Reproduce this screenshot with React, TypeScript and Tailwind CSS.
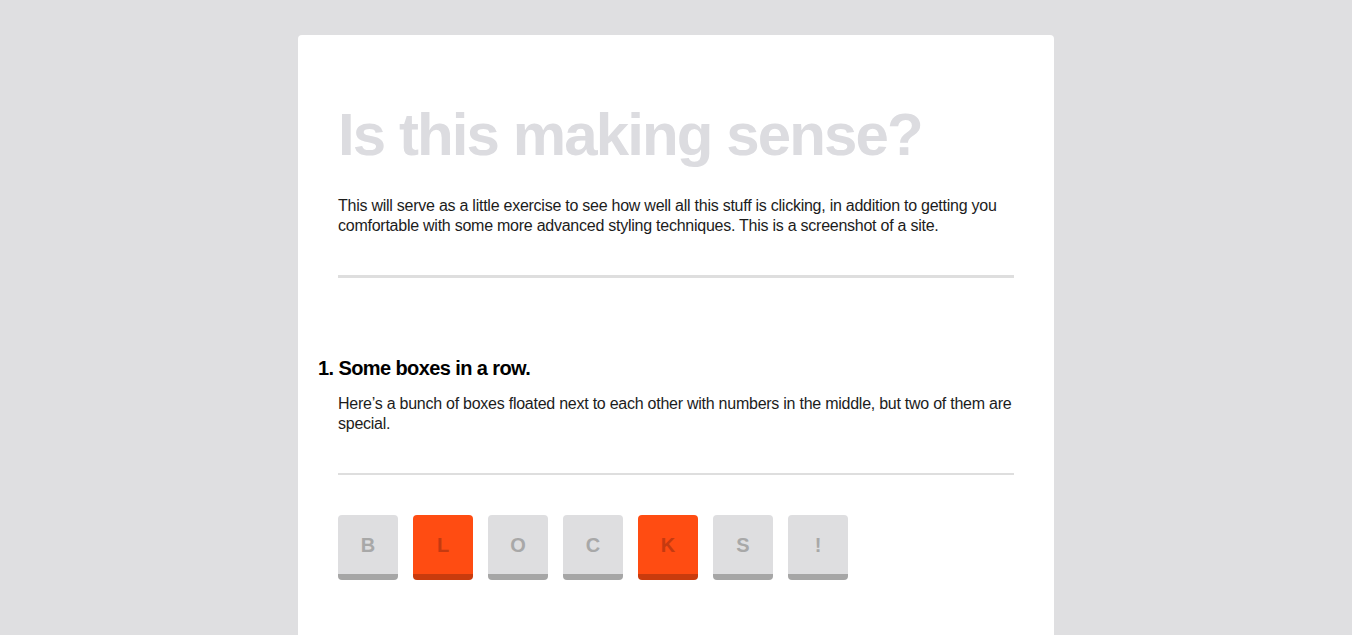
import React from "react";

const letters = [
  { ch: "B", hot: false },
  { ch: "L", hot: true },
  { ch: "O", hot: false },
  { ch: "C", hot: false },
  { ch: "K", hot: true },
  { ch: "S", hot: false },
  { ch: "!", hot: false },
];

export default function App() {
  return (
    <div className="min-h-screen bg-[#dfdfe1] pt-[35px] font-['Liberation_Sans',Arial,sans-serif]">
      <div className="mx-auto w-[756px] bg-white rounded-[4px] px-10 pt-[65px] pb-16">
        {/* Page title */}
        <h1 className="text-[60px] leading-[69px] font-bold tracking-[-1.9px] text-[#dcdce0]">Is this making sense?</h1>
        <p className="mt-[27px] text-[16px] leading-[20px] tracking-[-0.25px] text-[#1c1c1c]">
          This will serve as a little exercise to see how well all this stuff is clicking, in addition to getting you
          comfortable with some more advanced styling techniques. This is a screenshot of a site.
        </p>
        <div className="mt-[39px] h-[3px] bg-[#dedede]" />

        {/* Section 1 */}
        <h2 className="mt-[79px] -ml-[20px] text-[20px] leading-[23px] font-bold tracking-[-0.6px] text-black">
          1.&nbsp;Some boxes in a row.
        </h2>
        <p className="mt-[14px] text-[16px] leading-[20px] tracking-[-0.25px] text-[#1c1c1c]">
          Here’s a bunch of boxes floated next to each other with numbers in the middle, but two of them are special.
        </p>
        <div className="mt-[39px] h-[2px] bg-[#dedede]" />

        <div className="mt-10 flex gap-[15px]">
          {letters.map((l) => (
            <div
              key={l.ch}
              className={`w-[60px] h-[65px] rounded-[4px] border-b-[6px] flex items-center justify-center text-[20px] font-bold ${
                l.hot
                  ? "bg-[#ff4c12] border-[#c93b0d] text-[#c53a10]"
                  : "bg-[#dedee0] border-[#a6a6a6] text-[#a8a8a8]"
              }`}
            >
              {l.ch}
            </div>
          ))}
        </div>
      </div>
    </div>
  );
}
